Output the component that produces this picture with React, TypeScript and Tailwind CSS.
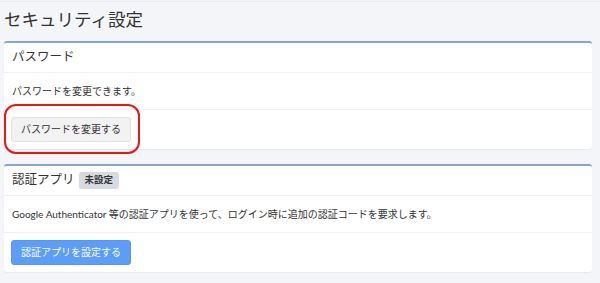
export default function App() {
  return (
    <div
      className="min-h-[283px] w-[600px] bg-[#f4f5f9] text-[#333]"
      style={{ fontFamily: 'Lato, "Noto Sans CJK JP", sans-serif' }}
    >
      <div className="h-[2px] border-b border-[#ebecf0]" />
      <h1 className="px-[4px] pt-[3px] text-[17.5px] leading-[30px] text-[#333]">セキュリティ設定</h1>

      <div className="mx-[4px] mr-[8px] mt-[6px] rounded-[3px] border-t-2 border-[#84a4dc] bg-white shadow-[0_1px_1px_rgba(0,0,0,0.05)]">
        <div className="flex h-[30px] items-center border-b border-[#f0f0f3] px-[8px]">
          <span className="text-[12.5px] leading-none">パスワード</span>
        </div>
        <div className="flex h-[37px] items-center border-b border-[#f0f0f3] px-[8px] text-[10px]">
          パスワードを変更できます。
        </div>
        <div className="relative flex h-[39px] items-center px-[7px]">
          <button className="h-[25px] w-[120px] whitespace-nowrap rounded-[3px] border border-[#e2e2e2] bg-[#f2f2f2] text-[10px] text-[#333]">
            パスワードを変更する
          </button>
          <div className="absolute left-0 top-[-6px] h-[50px] w-[136px] rounded-[12px] border-2 border-[#f0160f]" />
        </div>
      </div>

      <div className="mx-[4px] mr-[8px] mt-[15px] rounded-[3px] border-t-2 border-[#84a4dc] bg-white shadow-[0_1px_1px_rgba(0,0,0,0.05)]">
        <div className="flex h-[30px] items-center gap-[4px] border-b border-[#f0f0f3] px-[8px]">
          <span className="text-[12.5px] leading-none">認証アプリ</span>
          <span className="flex h-[17px] items-center rounded-[3px] bg-[#d7dbe1] px-[6px] text-[9.5px] font-bold text-[#333]">
            未設定
          </span>
        </div>
        <div className="flex h-[37px] items-center border-b border-[#f0f0f3] px-[8px] text-[10px]">
          Google Authenticator 等の認証アプリを使って、ログイン時に追加の認証コードを要求します。
        </div>
        <div className="flex h-[39px] items-center px-[7px]">
          <button className="h-[25px] w-[120px] whitespace-nowrap rounded-[3px] border border-[#5797f0] bg-[#5c9df8] text-[10px] text-white">
            認証アプリを設定する
          </button>
        </div>
      </div>
    </div>
  )
}
